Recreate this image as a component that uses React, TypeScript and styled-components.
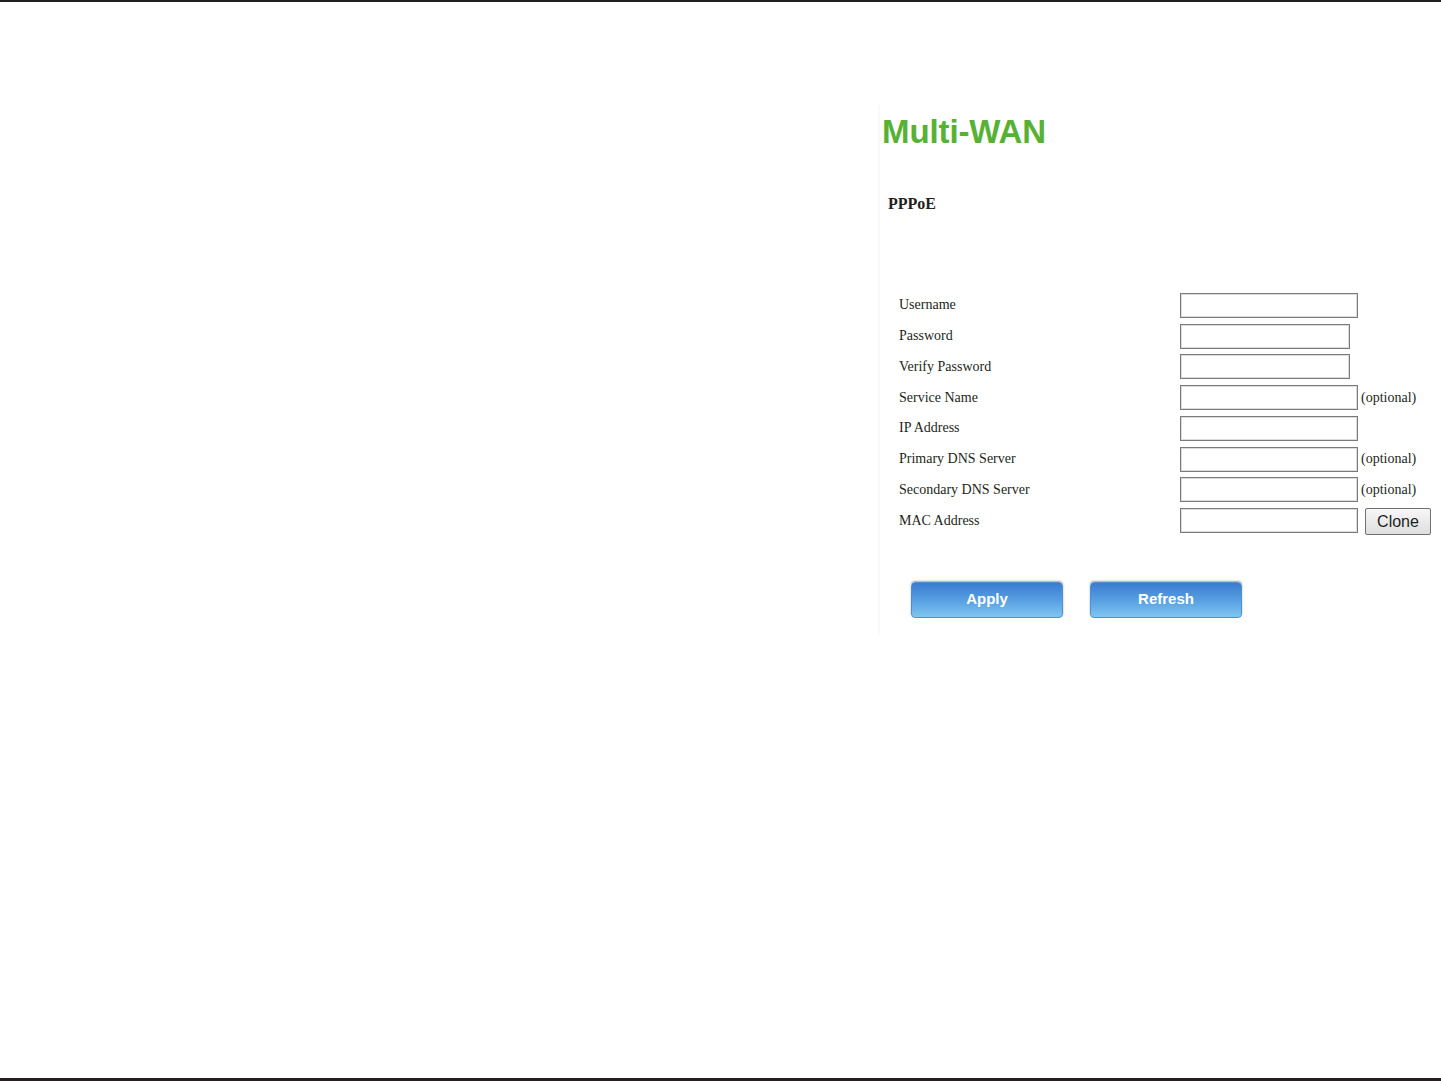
import { Fragment } from "react";
import styled, { createGlobalStyle } from "styled-components";

const GlobalStyle = createGlobalStyle`
  html, body {
    margin: 0;
    padding: 0;
    background: #ffffff;
  }
`;

const Page = styled.div`
  box-sizing: border-box;
  height: 1081px;
  border-top: 2px solid #231f20;
  border-bottom: 3px solid #231f20;
  padding: 103px 0 0 878px;
`;

const Panel = styled.section`
  box-sizing: border-box;
  width: 562px;
  height: 530px;
  border-left: 2px solid #f9f9f9;
  padding-top: 10px;
`;

const Title = styled.h1`
  margin: 0 0 0 2px;
  font-family: "Liberation Sans", Arial, sans-serif;
  font-weight: bold;
  font-size: 33px;
  line-height: 33px;
  letter-spacing: -0.1px;
  color: #57b233;
`;

const SubTitle = styled.h2`
  margin: 48px 0 0 8px;
  font-family: "Liberation Serif", "Times New Roman", serif;
  font-weight: bold;
  font-size: 16px;
  line-height: 16px;
  color: #231f20;
`;

const Form = styled.div`
  display: grid;
  grid-template-columns: 281px auto;
  grid-auto-rows: 30.75px;
  align-items: center;
  margin: 78px 0 0 19px;
`;

const Label = styled.div`
  font-family: "Liberation Serif", "Times New Roman", serif;
  font-size: 14px;
  color: #231f20;
`;

const Field = styled.div`
  display: flex;
  align-items: center;
`;

const TextInput = styled.input<{ $w: number }>`
  box-sizing: border-box;
  width: ${(p) => p.$w}px;
  height: 25px;
  margin: 0;
  padding: 0 3px;
  border: 1px solid #7a7a7a;
  box-shadow: inset 0 0 0 1px #dcdcdc;
  background: #fff;
  outline: none;
`;

const Note = styled.span`
  margin-left: 3px;
  font-family: "Liberation Serif", "Times New Roman", serif;
  font-size: 14px;
  color: #231f20;
`;

const CloneButton = styled.button`
  box-sizing: border-box;
  margin: 2px 0 0 7px;
  width: 66px;
  height: 27px;
  padding: 0;
  border: 1px solid #707070;
  border-radius: 2px;
  background: linear-gradient(#f7f7f7, #dedede);
  font-family: "Liberation Sans", Arial, sans-serif;
  font-size: 16px;
  color: #1e1e1e;
`;

const Actions = styled.div`
  display: flex;
  gap: 27px;
  margin: 46px 0 0 31px;
`;

const BlueButton = styled.button`
  box-sizing: border-box;
  width: 152px;
  height: 36px;
  padding: 0 0 3px;
  border: 1px solid #4f8fd8;
  border-radius: 4px;
  background: linear-gradient(#3a7ccf, #5aa2e3 55%, #80c6f1);
  box-shadow: 0 -1px 2px rgba(0, 0, 0, 0.35);
  font-family: "Liberation Sans", Arial, sans-serif;
  font-weight: bold;
  font-size: 15px;
  color: #ffffff;
`;

type Row = { label: string; w: number; note?: boolean; clone?: boolean };

const rows: Row[] = [
  { label: "Username", w: 178 },
  { label: "Password", w: 170 },
  { label: "Verify Password", w: 170 },
  { label: "Service Name", w: 178, note: true },
  { label: "IP Address", w: 178 },
  { label: "Primary DNS Server", w: 178, note: true },
  { label: "Secondary DNS Server", w: 178, note: true },
  { label: "MAC Address", w: 178, clone: true },
];

const App = () => {
  return (
    <>
      <GlobalStyle />
      <Page>
        <Panel>
          <Title>Multi-WAN</Title>
          <SubTitle>PPPoE</SubTitle>
          <Form>
            {rows.map((r) => (
              <Fragment key={r.label}>
                <Label>{r.label}</Label>
                <Field>
                  <TextInput
                    $w={r.w}
                    type={r.label.includes("Password") ? "password" : "text"}
                  />
                  {r.note && <Note>(optional)</Note>}
                  {r.clone && <CloneButton>Clone</CloneButton>}
                </Field>
              </Fragment>
            ))}
          </Form>
          <Actions>
            <BlueButton>Apply</BlueButton>
            <BlueButton>Refresh</BlueButton>
          </Actions>
        </Panel>
      </Page>
    </>
  );
};

export default App;
